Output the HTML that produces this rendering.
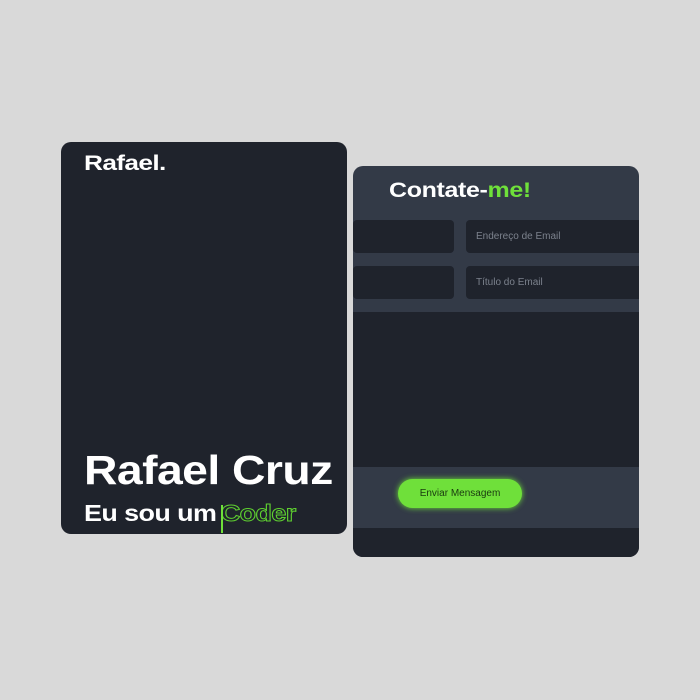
<!DOCTYPE html>
<html><head><style>
body{margin:0;width:700px;height:700px;background:#d9d9d9;position:relative;overflow:hidden;font-family:"Liberation Sans",sans-serif}
.l{position:absolute;left:61px;top:142px;width:286px;height:392px;background:#1f232c;border-radius:10px}
.r{position:absolute;left:353px;top:166px;width:286px;height:391px;background:#333a47;border-radius:10px;overflow:hidden}
.t{position:absolute;color:#fff;font-weight:bold;white-space:nowrap;transform-origin:left top}
.in{position:absolute;background:#1f232c;border-radius:4px;color:#7c828d;font-size:10px;line-height:33px;padding-left:10px;box-sizing:border-box;height:33px}
</style></head><body>
<div class="l">
<div class="t" style="left:23px;top:10px;font-size:21px;letter-spacing:-0.5px;transform:scaleX(1.25)">Rafael.</div>
<div class="t" style="left:23px;top:305px;font-size:41px;letter-spacing:-0.5px;transform:scaleX(1.13)">Rafael Cruz</div>
<div class="t" style="left:23px;top:358px;font-size:23px;letter-spacing:-0.5px;transform:scaleX(1.17)">Eu sou um <span style="color:transparent;-webkit-text-stroke:1px #5ecf30;margin-left:-2px">Coder</span></div>
<div style="position:absolute;left:160px;top:363px;width:2px;height:28px;background:#6fe03a"></div>
</div>
<div class="r">
<div class="t" style="left:36px;top:13px;font-size:21px;letter-spacing:-0.3px;transform:scaleX(1.19)">Contate-<span style="color:#6fe03a">me!</span></div>
<div class="in" style="left:0;top:54px;width:101px"></div>
<div class="in" style="left:113px;top:54px;width:180px">Endereço de Email</div>
<div class="in" style="left:0;top:100px;width:101px"></div>
<div class="in" style="left:113px;top:100px;width:180px">Título do Email</div>
<div style="position:absolute;left:0;top:146px;width:286px;height:155px;background:#1f232c"></div>
<div style="position:absolute;left:0;top:362px;width:286px;height:29px;background:#1f232c"></div>
<div style="position:absolute;left:45px;top:313px;width:124px;height:29px;border-radius:15px;background:#6fe03a;box-shadow:0 0 6px #6fe03a;color:#1a3a10;font-size:10px;text-align:center;line-height:29px">Enviar Mensagem</div>
</div>
</body></html>
